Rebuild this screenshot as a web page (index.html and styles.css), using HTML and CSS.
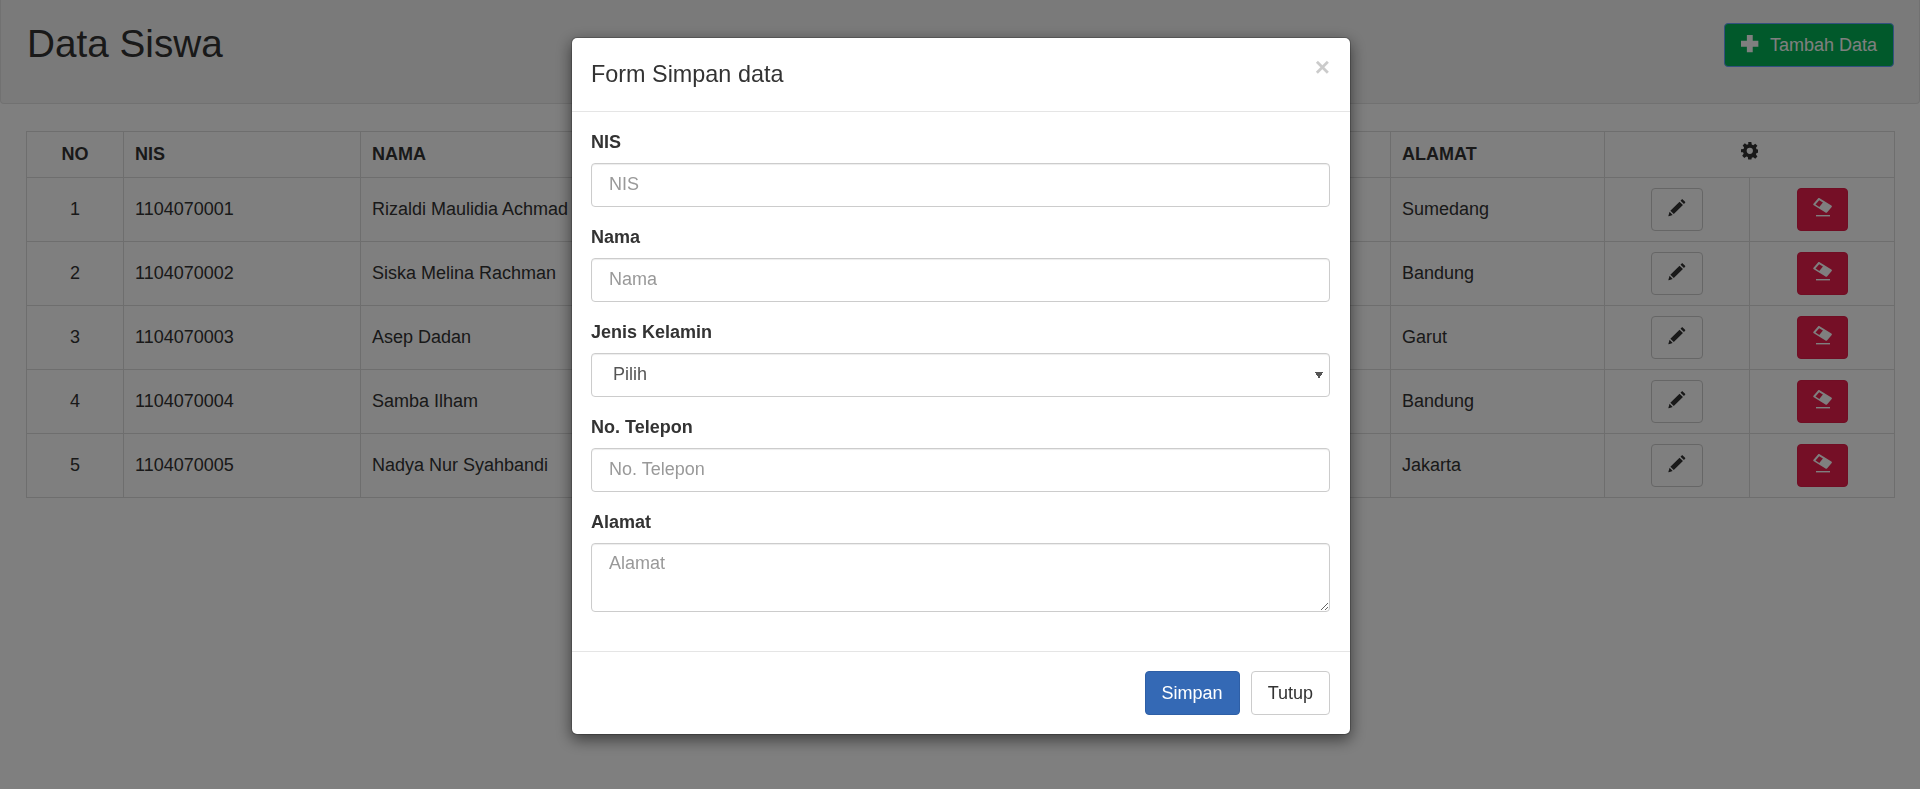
FILE: index.html
```html
<!DOCTYPE html>
<html lang="id">
<head>
    <meta charset="UTF-8">
    <meta name="viewport" content="width=device-width, initial-scale=1.0">
    <title>Data Siswa</title>
    <link rel="stylesheet" href="styles.css">
</head>
<body>
    <svg class="icon-defs" aria-hidden="true">
        <symbol id="i-plus" viewBox="0 0 18 18">
            <path d="M6 0h6v6h6v6h-6v6H6v-6H0V6h6z"/>
        </symbol>
        <symbol id="i-cog" viewBox="0 0 18 18">
            <path fill-rule="evenodd" d="M7.4 0h3.2l.4 2.6 1.5.6 2.1-1.5 2.2 2.2-1.5 2.1.6 1.5 2.6.4v3l-2.6.4-.6 1.5 1.5 2.1-2.2 2.2-2.1-1.500-1.500.6-.4 2.600H7.400L7 15.400l-1.500-.6-2.100 1.500-2.200-2.200 1.500-2.100-.6-1.500L0 10.500v-3l2.600-.4.6-1.500-1.500-2.100 2.200-2.200 2.100 1.500 1.500-.6zM9 5.800a3.200 3.200 0 1 0 0 6.400 3.200 3.200 0 0 0 0-6.400z"/>
        </symbol>
        <symbol id="i-pencil" viewBox="0 0 18 18">
            <path d="M14.500 0l3.500 3.300-1.700 1.700-3.500-3.300zM11.800 2.700l3.500 3.400-9.400 9.300-3.500-3.400zM1.600 13.100l3.200 3.200-4.600 1.500z"/>
        </symbol>
        <symbol id="i-erase" viewBox="0 0 19 19">
            <path fill-rule="evenodd" d="M6.600.2l11.800 7.300c.6.400.7 1 .3 1.500l-4.700 5.400c-.4.400-1 .5-1.500.2L.8 7.300C.2 6.900.1 6.300.5 5.800L5 .5c.4-.5 1-.6 1.600-.3zM6.200 2.200L2.500 6.400l3.800 2.500 3.600-4.400z"/>
            <rect x="3" y="17" width="14" height="1.400"/>
        </symbol>
    </svg>

    <header class="page-head">
        <h1>Data Siswa</h1>
        <button class="btn btn-tall btn-add"><svg class="icon"><use href="#i-plus"/></svg>Tambah Data</button>
    </header>

    <main class="content">
        <table class="data-table">
            <colgroup>
                <col class="col-no">
                <col class="col-nis">
                <col class="col-nama">
                <col class="col-jk">
                <col class="col-telp">
                <col class="col-alamat">
                <col class="col-edit">
                <col class="col-hapus">
            </colgroup>
            <thead>
                <tr>
                    <th class="center">NO</th>
                    <th>NIS</th>
                    <th>NAMA</th>
                    <th>JENIS KELAMIN</th>
                    <th>TELEPON</th>
                    <th>ALAMAT</th>
                    <th colspan="2" class="center"><svg class="icon icon-cog"><use href="#i-cog"/></svg></th>
                </tr>
            </thead>
            <tbody>
                <tr>
                    <td class="center">1</td>
                    <td>1104070001</td>
                    <td>Rizaldi Maulidia Achmad</td>
                    <td>Laki-laki</td>
                    <td>081234567890</td>
                    <td>Sumedang</td>
                    <td class="center"><button class="btn btn-edit"><svg class="icon"><use href="#i-pencil"/></svg></button></td>
                    <td class="center"><button class="btn btn-erase"><svg class="icon"><use href="#i-erase"/></svg></button></td>
                </tr>
                <tr>
                    <td class="center">2</td>
                    <td>1104070002</td>
                    <td>Siska Melina Rachman</td>
                    <td>Perempuan</td>
                    <td>081234567891</td>
                    <td>Bandung</td>
                    <td class="center"><button class="btn btn-edit"><svg class="icon"><use href="#i-pencil"/></svg></button></td>
                    <td class="center"><button class="btn btn-erase"><svg class="icon"><use href="#i-erase"/></svg></button></td>
                </tr>
                <tr>
                    <td class="center">3</td>
                    <td>1104070003</td>
                    <td>Asep Dadan</td>
                    <td>Laki-laki</td>
                    <td>081234567892</td>
                    <td>Garut</td>
                    <td class="center"><button class="btn btn-edit"><svg class="icon"><use href="#i-pencil"/></svg></button></td>
                    <td class="center"><button class="btn btn-erase"><svg class="icon"><use href="#i-erase"/></svg></button></td>
                </tr>
                <tr>
                    <td class="center">4</td>
                    <td>1104070004</td>
                    <td>Samba Ilham</td>
                    <td>Laki-laki</td>
                    <td>081234567893</td>
                    <td>Bandung</td>
                    <td class="center"><button class="btn btn-edit"><svg class="icon"><use href="#i-pencil"/></svg></button></td>
                    <td class="center"><button class="btn btn-erase"><svg class="icon"><use href="#i-erase"/></svg></button></td>
                </tr>
                <tr>
                    <td class="center">5</td>
                    <td>1104070005</td>
                    <td>Nadya Nur Syahbandi</td>
                    <td>Perempuan</td>
                    <td>081234567894</td>
                    <td>Jakarta</td>
                    <td class="center"><button class="btn btn-edit"><svg class="icon"><use href="#i-pencil"/></svg></button></td>
                    <td class="center"><button class="btn btn-erase"><svg class="icon"><use href="#i-erase"/></svg></button></td>
                </tr>
            </tbody>
        </table>
    </main>

    <div class="backdrop">
        <form class="modal">
            <div class="modal-head">
                <h4>Form Simpan data</h4>
                <span class="close">×</span>
            </div>
            <div class="modal-body">
                <div class="form-group">
                    <label>NIS</label>
                    <input type="text" class="form-control" placeholder="NIS">
                </div>
                <div class="form-group">
                    <label>Nama</label>
                    <input type="text" class="form-control" placeholder="Nama">
                </div>
                <div class="form-group">
                    <label>Jenis Kelamin</label>
                    <select class="form-control pilih">
                        <option>Pilih</option>
                        <option>Laki-laki</option>
                        <option>Perempuan</option>
                    </select>
                </div>
                <div class="form-group">
                    <label>No. Telepon</label>
                    <input type="text" class="form-control" placeholder="No. Telepon">
                </div>
                <div class="form-group">
                    <label>Alamat</label>
                    <textarea class="form-control area" placeholder="Alamat"></textarea>
                </div>
            </div>
            <div class="modal-foot">
                <button type="button" class="btn btn-tall btn-save">Simpan</button>
                <button type="button" class="btn btn-tall btn-close">Tutup</button>
            </div>
        </form>
    </div>
</body>
</html>
```

FILE: styles.css
```css
* {
    box-sizing: border-box;
}

body {
    margin: 0;
    font-family: "Liberation Sans", Arial, sans-serif;
    font-size: 18px;
    line-height: 25px;
    color: #333;
    background-color: #fff;
}

.icon-defs {
    display: none;
}

.icon {
    width: 17.6px;
    height: 17.6px;
    fill: currentColor;
    vertical-align: -2px;
}

/* kepala halaman */
.page-head {
    display: flex;
    justify-content: space-between;
    align-items: flex-start;
    height: 104px;
    padding: 23px 25px 0 26px;
    background-color: #f5f5f5;
    border: 1px solid #e3e3e3;
    border-top: none;
    border-radius: 0 0 4px 4px;
}

.page-head h1 {
    margin: 0;
    font-size: 38.72px;
    font-weight: 500;
    line-height: 1.1;
}

.btn {
    padding: 8px 16px;
    font-family: inherit;
    font-size: 18px;
    line-height: 25px;
    border: 1px solid transparent;
    border-radius: 4px;
    cursor: pointer;
}

.btn-tall {
    height: 44px;
}

.btn-add {
    color: #fff;
    background-color: #02b356;
    border-color: #66a0ff;
}

.btn-add .icon {
    margin-right: 11px;
}

/* tabel */
.content {
    padding: 27px 26px 0;
}

.data-table {
    width: 100%;
    table-layout: fixed;
    border-collapse: collapse;
    background-color: #fff;
}

.col-no { width: 97px; }
.col-nis { width: 237px; }
.col-nama { width: 350px; }
.col-jk { width: 340px; }
.col-telp { width: 340px; }
.col-alamat { width: 214px; }
.col-edit { width: 145px; }
.col-hapus { width: 145px; }

.data-table th,
.data-table td {
    padding: 10px 11px;
    text-align: left;
    vertical-align: middle;
    border: 1px solid #ddd;
}

.data-table .center {
    text-align: center;
}

.icon-cog {
    vertical-align: 0;
}

.btn-edit {
    color: #333;
    background-color: #fff;
    border-color: #ccc;
}

.btn-erase {
    color: #fff;
    background-color: #ea1e4c;
    border-color: #e01c48;
}

.btn-erase .icon {
    width: 19px;
    height: 19px;
    margin: 0 -1px;
    vertical-align: -2px;
}

/* modal */
.backdrop {
    position: fixed;
    top: 0;
    left: 0;
    right: 0;
    bottom: 0;
    display: flex;
    justify-content: center;
    align-items: flex-start;
    padding-top: 37px;
    background-color: rgba(0, 0, 0, 0.5);
}

.modal {
    width: 780px;
    margin-left: 2px;
    background-color: #fff;
    border: 1px solid rgba(0, 0, 0, 0.2);
    border-radius: 6px;
    box-shadow: 0 5px 15px rgba(0, 0, 0, 0.5);
    background-clip: padding-box;
}

.modal-head {
    display: flex;
    justify-content: space-between;
    align-items: flex-start;
    height: 74px;
    padding: 0 20px 0 19px;
    border-bottom: 1px solid #e5e5e5;
}

.modal-head h4 {
    margin: 0;
    padding-top: 20px;
    font-size: 23.4px;
    font-weight: 500;
    line-height: 32px;
}

.close {
    margin-top: 16px;
    font-size: 26px;
    font-weight: bold;
    line-height: 1;
    color: #000;
    opacity: 0.2;
}

.modal-body {
    padding: 18px 20px 21px 19px;
}

.form-group {
    margin-bottom: 18px;
}

.form-group label {
    display: block;
    margin-bottom: 8px;
    font-weight: bold;
}

.form-control {
    display: block;
    width: 100%;
    height: 44px;
    padding: 7px 16px 9px 17px;
    font-family: inherit;
    font-size: 18px;
    line-height: 25px;
    color: #555;
    background-color: #fff;
    border: 1px solid #ccc;
    border-radius: 4px;
    box-shadow: inset 0 1px 1px rgba(0, 0, 0, 0.075);
}

.form-control::placeholder {
    color: #999;
}

.pilih {
    appearance: none;
    padding-left: 21px;
    background-image: linear-gradient(to top right, transparent 50%, #555 50%), linear-gradient(to top left, transparent 50%, #555 50%);
    background-size: 4px 7px;
    background-repeat: no-repeat;
    background-position: right 10px center, right 6px center;
}

.area {
    height: 69px;
}

.modal-foot {
    display: flex;
    justify-content: flex-end;
    gap: 11px;
    padding: 19px 20px;
    border-top: 1px solid #e5e5e5;
}

.btn-save {
    color: #fff;
    background-color: #3469b5;
    border-color: #2e5fa6;
}

.btn-close {
    color: #333;
    background-color: #fff;
    border-color: #ccc;
}
```
